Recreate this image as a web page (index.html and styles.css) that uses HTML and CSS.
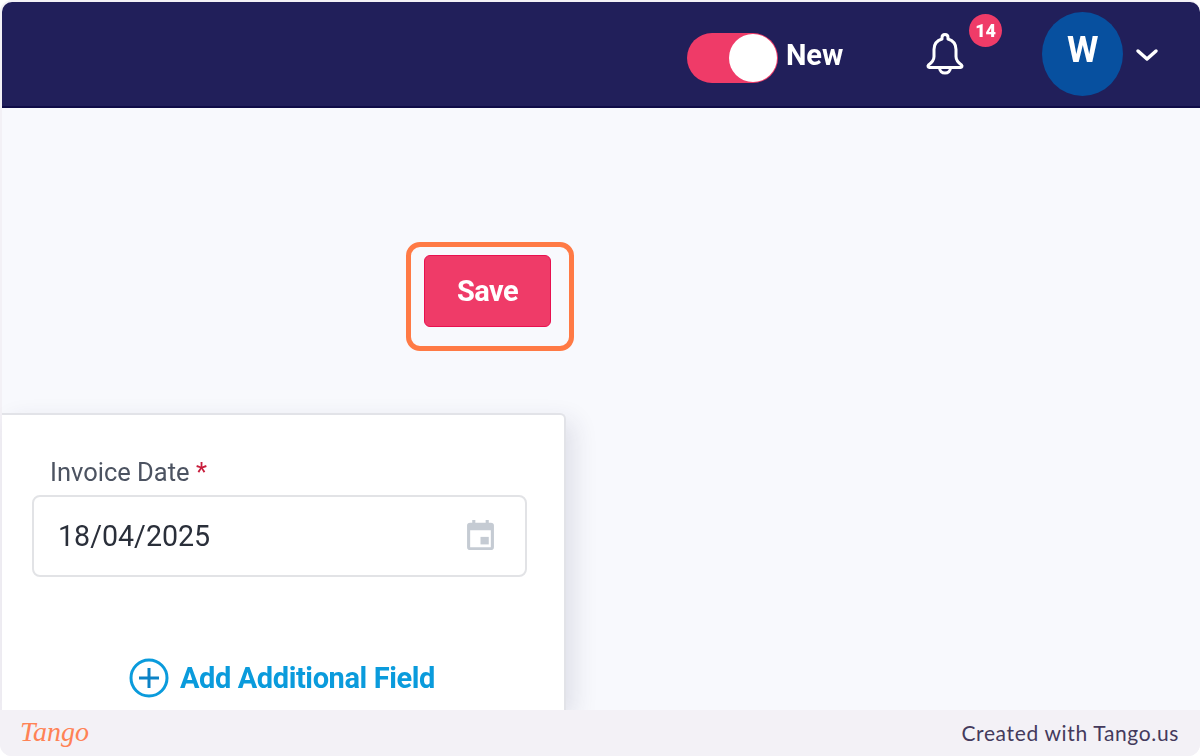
FILE: index.html
```html
<!DOCTYPE html>
<html lang="en">
<head>
  <meta charset="UTF-8" />
  <meta name="viewport" content="width=device-width, initial-scale=1.0" />
  <title>Invoice – Save</title>
  <link rel="stylesheet" href="styles.css">
</head>
<body>
  <div class="frame">
    <header class="topbar">
      <div class="toggle"><span class="knob"></span></div>
      <span class="toggleLabel">New</span>
      <div class="bell">
        <svg width="40" height="48" viewBox="0 0 40 48" fill="none" stroke="#fff" stroke-width="3" stroke-linejoin="round">
          <path d="M20 3.500c-1.800 0-3 1.200-3 3v1.500c-5 1.500-8 5.500-8 10.500v7c0 3.500-2 6-5.500 8.500-1 1.100-.4 2.500 1 2.500h31c1.400 0 2-1.400 1-2.500-3.500-2.500-5.500-5-5.500-8.500v-7c0-5-3-9-8-10.500v-1.500c0-1.800-1.200-3-3-3z" />
          <path d="M14.500 36.500c0 3.500 2.500 5.500 5.500 5.500s5.500-2 5.500-5.500" />
        </svg>
        <span class="badge">14</span>
      </div>
      <div class="avatar">W</div>
      <svg class="chevron" width="24" height="14" viewBox="0 0 24 14" fill="none" stroke="#fff" stroke-width="3.500" stroke-linecap="round" stroke-linejoin="round">
        <path d="M3 3l9 8 9-8" />
      </svg>
    </header>

    <main class="content">
      <div class="saveRow">
        <button class="saveBtn">Save</button>
        <span class="highlight"></span>
      </div>

      <section class="card">
        <label class="fieldLabel">Invoice Date <span class="req">*</span></label>
        <div class="dateInput">
          <span class="dateText">18/04/2025</span>
          <svg class="calIcon" width="31" height="32" viewBox="0 0 30 34" preserveAspectRatio="none" fill="#c5cbd3">
            <path d="M7 1h3v3h10V1h3v3h2c2 0 3 1 3 3v23c0 2-1 3-3 3H5c-2 0-3-1-3-3V7c0-2 1-3 3-3h2zM5 12v18h20V12z" />
            <path d="M15 19h8v8h-8z" />
          </svg>
        </div>
        <a class="addField">
          <svg width="40" height="40" viewBox="0 0 40 40" fill="none" stroke="#0a9bdc" stroke-width="3">
            <circle cx="20" cy="20" r="18" />
            <path d="M10 20h20M20 10v20" stroke="#0b82c6" />
          </svg>
          Add Additional Field
        </a>
      </section>
    </main>

    <footer class="tangoBar">
      <span class="tangoLogo">Tango</span>
      <span class="tangoCredit">Created with Tango.us</span>
    </footer>
  </div>
</body>
</html>
```

FILE: styles.css
```css
html, body {
  margin: 0;
  padding: 0;
  background: #fff;
  height: 100vh;
  overflow: hidden;
  font-family: Roboto, sans-serif;
}

.frame {
  height: 756px;
  box-sizing: border-box;
  padding: 2px 0 0 2px;
  display: flex;
  flex-direction: column;
  border-radius: 12px;
  overflow: hidden;
  background: #f3f1f6;
}

.topbar {
  flex: none;
  height: 106px;
  box-sizing: border-box;
  background: #211f5a;
  border-bottom: 2px solid #0f0c47;
  border-radius: 10px 10px 0 0;
  display: flex;
  align-items: center;
  color: #fff;
  filter: blur(0.5px);
}

.toggle {
  margin-left: 685px;
  width: 91px;
  height: 50px;
  box-sizing: border-box;
  border-radius: 25px;
  background: #ef3b68;
  padding: 1px;
  display: flex;
  justify-content: flex-end;
  position: relative;
  top: 4px;
}

.knob {
  width: 48px;
  height: 48px;
  border-radius: 50%;
  background: #fff;
}

.toggleLabel {
  margin-left: 8px;
  font-size: 29px;
  font-weight: 700;
  letter-spacing: -0.1px;
  position: relative;
  top: 1px;
}

.bell {
  margin-left: 82px;
  position: relative;
  width: 40px;
  height: 48px;
  top: 1px;
}

.badge {
  position: absolute;
  left: 44px;
  top: -17px;
  width: 33px;
  height: 33px;
  border-radius: 50%;
  background: #ef3b68;
  font-size: 18px;
  font-weight: 900;
  line-height: 33px;
  text-align: center;
}

.avatar {
  margin-left: 77px;
  width: 81px;
  height: 84px;
  border-radius: 50%;
  background: #07509f;
  font-size: 36px;
  font-weight: 700;
  line-height: 76px;
  text-align: center;
}

.chevron {
  margin-left: 12px;
  margin-top: 1px;
}

.content {
  flex: 1;
  min-height: 0;
  display: flex;
  flex-direction: column;
  background: #f8f9fd;
}

.saveRow {
  position: relative;
  margin: 147px 0 0 422px;
  width: 127px;
  height: 72px;
}

.saveBtn {
  display: block;
  width: 127px;
  height: 72px;
  background: #ef3b68;
  border: 1px solid #e8114f;
  border-radius: 6px;
  color: #fff;
  font-family: Roboto, sans-serif;
  font-size: 29px;
  font-weight: 700;
  letter-spacing: -0.6px;
  filter: blur(0.5px);
}

/* orange callout drawn over the button */
.highlight {
  position: absolute;
  left: -18px;
  top: -13px;
  width: 168px;
  height: 109px;
  box-sizing: border-box;
  border: 5px solid #ff7a45;
  border-radius: 14px;
}

.card {
  flex: 1;
  min-height: 0;
  margin-top: 86px;
  width: 564px;
  box-sizing: border-box;
  background: #fff;
  border: 2px solid #e2e3e8;
  border-width: 2px 2px 0 0;
  border-top-right-radius: 6px;
  box-shadow: 8px 8px 24px rgba(40, 45, 80, 0.12);
  padding: 42px 37px 0 30px;
}

.fieldLabel {
  display: block;
  margin-left: 18px;
  font-size: 25.500px;
  line-height: 30px;
  color: #4c5361;
  filter: blur(0.4px);
}

.req {
  color: #c81d3c;
}

.dateInput {
  margin-top: 8px;
  height: 82px;
  box-sizing: border-box;
  border: 2px solid #e2e3e6;
  border-radius: 8px;
  padding: 0 29px 0 24px;
  display: flex;
  align-items: center;
  justify-content: space-between;
  color: #2a2f3a;
}

.dateText {
  font-size: 28.600px;
  line-height: 32px;
  margin-top: -1px;
  filter: blur(0.4px);
}

.calIcon {
  margin-top: -2px;
  filter: blur(0.5px);
}

.addField {
  margin-top: 81px;
  margin-left: 97px;
  display: flex;
  align-items: center;
  gap: 11px;
  font-size: 29px;
  font-weight: 700;
  letter-spacing: -0.4px;
  color: #0a9bdc;
  filter: blur(0.5px);
}

.tangoBar {
  flex: none;
  height: 46px;
  margin-left: -2px;
  background: #f3f1f6;
  display: flex;
  align-items: center;
  justify-content: space-between;
  padding: 0 21px 2px 20px;
  box-sizing: border-box;
}

.tangoLogo {
  font-family: "Liberation Serif", serif;
  font-style: italic;
  font-size: 28px;
  color: #ff8255;
}

.tangoCredit {
  font-family: Lato, sans-serif;
  font-size: 21px;
  letter-spacing: 0.65px;
  color: #443a5c;
}
```
